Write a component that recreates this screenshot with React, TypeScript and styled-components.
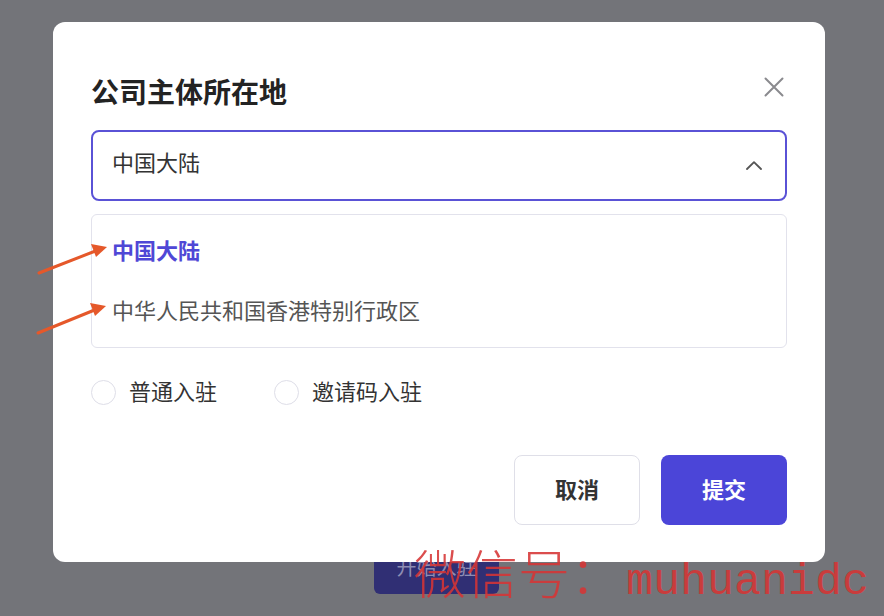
import React, { useState } from 'react';
import styled, { createGlobalStyle } from 'styled-components';

const GlobalStyle = createGlobalStyle`
  html, body {
    margin: 0;
    padding: 0;
    background: #737479;
  }
  * { box-sizing: border-box; }
  body {
    font-family: Inter, "Noto Sans CJK SC", sans-serif;
  }
`;

const Page = styled.div`
  position: relative;
  width: 884px;
  height: 616px;
  overflow: hidden;
  background: #737479;
  padding: 536px 0 0 374px;
`;

const BehindButton = styled.div`
  width: 125px;
  height: 58px;
  border-radius: 6px;
  background: #302f74;
  color: #8e8db3;
  font-size: 20px;
  display: flex;
  align-items: center;
  justify-content: center;
  padding-top: 2px;
`;

const Overlay = styled.div`
  position: absolute;
  inset: 0;
  padding: 22px 0 0 53px;
`;

const Modal = styled.div`
  width: 772px;
  height: 540px;
  background: #ffffff;
  border-radius: 12px;
  padding: 51px 38px 0 38px;
  display: flex;
  flex-direction: column;
`;

const Header = styled.div`
  display: flex;
  justify-content: space-between;
  align-items: center;
`;

const Title = styled.h2`
  margin: 0;
  font-size: 28px;
  line-height: 40px;
  font-weight: 700;
  color: #232323;
`;

const CloseButton = styled.button`
  border: none;
  background: none;
  padding: 0;
  width: 20px;
  height: 20px;
  margin: 0 3px 13px 0;
  cursor: pointer;
  display: flex;
`;

const Select = styled.div`
  margin-top: 17px;
  height: 71px;
  border: 2px solid #5a52d6;
  border-radius: 8px;
  display: flex;
  align-items: center;
  justify-content: space-between;
  padding: 0 23px 0 20px;
  font-size: 22px;
  color: #333333;
`;

const SelectText = styled.span`
  line-height: 30px;
  margin-top: -5px;
  margin-left: -1px;
`;

const Dropdown = styled.ul`
  list-style: none;
  margin: 13px 0 0 0;
  padding: 6px 0;
  border: 1px solid #e2e2ec;
  border-radius: 6px;
`;

const Option = styled.li<{ $active?: boolean }>`
  height: 60px;
  display: flex;
  align-items: center;
  padding: 0 0 5px 20px;
  font-size: 22px;
  font-weight: ${p => (p.$active ? 700 : 400)};
  color: ${p => (p.$active ? '#4f47d6' : '#555555')};
  cursor: pointer;
`;

const RadioGroup = styled.div`
  margin-top: 31px;
  display: flex;
  align-items: center;
  gap: 57px;
`;

const RadioLabel = styled.label`
  display: flex;
  align-items: center;
  gap: 13px;
  font-size: 22px;
  color: #333333;
  line-height: 26px;
  cursor: pointer;
`;

const RadioCircle = styled.span<{ $checked?: boolean }>`
  width: 25px;
  height: 25px;
  border-radius: 50%;
  border: 1.5px solid ${p => (p.$checked ? '#4f47d6' : '#dedee8')};
  background: #fff;
`;

const Footer = styled.div`
  margin-top: 50px;
  display: flex;
  justify-content: flex-end;
  gap: 21px;
`;

const Button = styled.button<{ $primary?: boolean }>`
  width: 126px;
  height: 70px;
  border-radius: 8px;
  font-family: inherit;
  font-size: 22px;
  font-weight: 700;
  cursor: pointer;
  padding: 0 0 4px 0;
  border: ${p => (p.$primary ? 'none' : '1.5px solid #dfdfe8')};
  background: ${p => (p.$primary ? '#4b45d8' : '#ffffff')};
  color: ${p => (p.$primary ? '#ffffff' : '#333333')};
`;

const Arrows = styled.svg`
  position: absolute;
  left: 30px;
  top: 235px;
`;

const Watermark = styled.div`
  position: absolute;
  left: 414px;
  top: 534px;
  color: rgba(214, 52, 52, 0.88);
  white-space: nowrap;
  display: flex;
  align-items: baseline;
  pointer-events: none;
`;

const WatermarkCjk = styled.span`
  font-family: "Noto Sans CJK SC", sans-serif;
  font-weight: 300;
  font-size: 52px;
`;

const WatermarkLatin = styled.span`
  font-family: "Liberation Mono", monospace;
  font-size: 45px;
  margin-left: 4px;
`;

const regions = ['中国大陆', '中华人民共和国香港特别行政区'];

export default function App() {
  const [selected, setSelected] = useState(regions[0]);
  const [mode, setMode] = useState<string | null>(null);

  return (
    <>
      <GlobalStyle />
      <Page>
        <BehindButton>开始入驻</BehindButton>
        <Overlay>
          <Modal>
            <Header>
              <Title>公司主体所在地</Title>
              <CloseButton aria-label="close">
                <svg width="20" height="20" viewBox="0 0 20 20">
                  <path d="M1.5 1.5 L18.5 18.5 M18.5 1.5 L1.5 18.5" stroke="#8a8a8e" strokeWidth="2" strokeLinecap="round" />
                </svg>
              </CloseButton>
            </Header>
            <Select>
              <SelectText>{selected}</SelectText>
              <svg width="16" height="9" viewBox="0 0 16 9">
                <path d="M1 8 L8 1.2 L15 8" fill="none" stroke="#555" strokeWidth="1.8" strokeLinecap="round" strokeLinejoin="round" />
              </svg>
            </Select>
            <Dropdown>
              {regions.map(r => (
                <Option key={r} $active={r === selected} onClick={() => setSelected(r)}>
                  {r}
                </Option>
              ))}
            </Dropdown>
            <RadioGroup>
              {['普通入驻', '邀请码入驻'].map(m => (
                <RadioLabel key={m} onClick={() => setMode(m)}>
                  <RadioCircle $checked={mode === m} />
                  {m}
                </RadioLabel>
              ))}
            </RadioGroup>
            <Footer>
              <Button>取消</Button>
              <Button $primary>提交</Button>
            </Footer>
          </Modal>
        </Overlay>
        <Arrows width="90" height="110" viewBox="0 0 90 110">
          <g stroke="#e5582a" strokeWidth="3" strokeLinecap="round">
            <line x1="9" y1="38" x2="68" y2="15" />
            <line x1="8" y1="98" x2="67" y2="74" />
          </g>
          <g fill="#e5582a">
            <polygon points="77,12 61,9 66,22" />
            <polygon points="76,71 60,68 65,81" />
          </g>
        </Arrows>
        <Watermark>
          <WatermarkCjk>微信号：</WatermarkCjk>
          <WatermarkLatin>muhuanidc</WatermarkLatin>
        </Watermark>
      </Page>
    </>
  );
}
